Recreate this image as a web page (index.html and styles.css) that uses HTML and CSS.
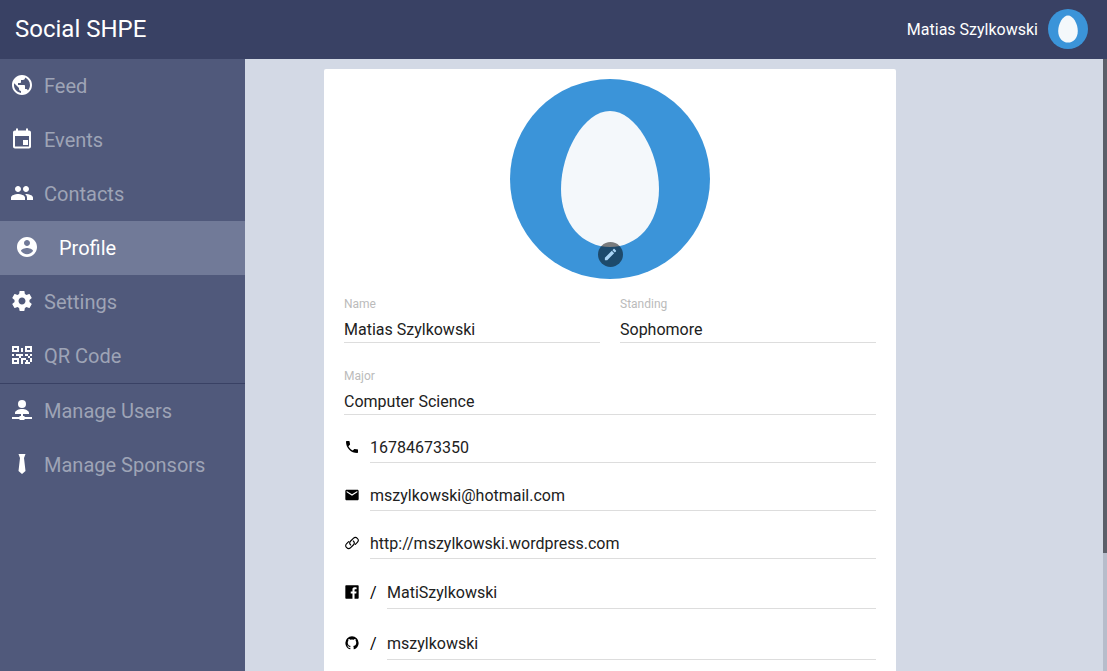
FILE: index.html
```html
<!DOCTYPE html>
<html lang="en">
<head>
<meta charset="utf-8">
<title>Social SHPE</title>
<link rel="stylesheet" href="styles.css">
</head>
<body>
<svg class="symbols" aria-hidden="true">
  <symbol id="egg" viewBox="0 0 200 200"><rect width="200" height="200" fill="#3b94d9"/><path fill="#f4f8fb" d="M100 32C126 32 149 73 149 110C149 145 127 168 100 168C73 168 51 145 51 110C51 73 74 32 100 32Z"/></symbol>
</svg>
<header class="topbar">
  <h1 class="brand">Social SHPE</h1>
  <a class="account" href="#profile"><span>Matias Szylkowski</span><svg class="account-avatar" aria-hidden="true"><use href="#egg"/></svg></a>
</header>
<div class="layout">
  <nav class="sidebar">
    <a class="nav-item" href="#feed"><svg class="nav-icon" viewBox="0 0 24 24"><path d="M12 2C6.48 2 2 6.48 2 12s4.48 10 10 10 10-4.48 10-10S17.52 2 12 2zm-1 17.93c-3.95-.49-7-3.85-7-7.93 0-.62.08-1.21.21-1.79L9 15v1c0 1.1.9 2 2 2v1.93zm6.9-2.54c-.26-.81-1-1.39-1.9-1.39h-1v-3c0-.55-.45-1-1-1H8v-2h2c.55 0 1-.45 1-1V7h2c1.1 0 2-.9 2-2v-.41c2.93 1.19 5 4.06 5 7.41 0 2.08-.8 3.97-2.1 5.39z"/></svg><span class="nav-label">Feed</span></a>
    <a class="nav-item" href="#events"><svg class="nav-icon" viewBox="0 0 24 24"><path d="M18 13h-5v5h5v-5zM16 1.500v2H8v-2H6v2H5c-1.110 0-2 .900-2 2v14c0 1.100.890 2 2 2h14c1.100 0 2-.900 2-2v-14c0-1.100-.900-2-2-2h-1v-2h-2zm3 18H5V9h14v10.500z"/></svg><span class="nav-label">Events</span></a>
    <a class="nav-item" href="#contacts"><svg class="nav-icon" viewBox="0 0 24 24"><path d="M16 11c1.660 0 2.990-1.340 2.990-3S17.660 5 16 5s-3 1.340-3 3 1.340 3 3 3zm-8 0c1.660 0 2.990-1.340 2.990-3S9.660 5 8 5 5 6.340 5 8s1.340 3 3 3zm0 2c-2.330 0-7 1.170-7 3.500V19h14v-2.500c0-2.330-4.670-3.500-7-3.500zm8 0c-.290 0-.620.020-.970.050 1.160.840 1.970 1.970 1.970 3.450V19h6v-2.500c0-2.330-4.670-3.500-7-3.500z"/></svg><span class="nav-label">Contacts</span></a>
    <a class="nav-item nav-item-active" href="#profile" aria-current="page"><svg class="nav-icon" viewBox="0 0 24 24"><path d="M12 2C6.480 2 2 6.480 2 12s4.480 10 10 10 10-4.480 10-10S17.520 2 12 2zm0 3c1.660 0 3 1.340 3 3s-1.340 3-3 3-3-1.340-3-3 1.340-3 3-3zm0 14.200c-2.500 0-4.710-1.280-6-3.220.030-1.990 4-3.080 6-3.080 1.990 0 5.970 1.090 6 3.080-1.290 1.940-3.500 3.220-6 3.220z"/></svg><span class="nav-label">Profile</span></a>
    <a class="nav-item" href="#settings"><svg class="nav-icon" viewBox="0 0 24 24"><path d="M19.430 12.980c.040-.320.070-.640.070-.980s-.030-.660-.070-.980l2.110-1.650c.190-.150.240-.420.120-.640l-2-3.460c-.120-.220-.390-.300-.610-.220l-2.490 1c-.520-.400-1.080-.730-1.690-.980l-.380-2.650C14.460 2.180 14.250 2 14 2h-4c-.250 0-.460.180-.490.420l-.380 2.650c-.610.250-1.170.590-1.690.980l-2.490-1c-.230-.090-.490 0-.610.220l-2 3.460c-.130.220-.070.490.120.640l2.110 1.650c-.040.320-.070.650-.070.980s.030.660.070.980l-2.110 1.650c-.190.150-.240.420-.120.640l2 3.460c.120.220.390.300.610.220l2.490-1c.520.400 1.080.730 1.690.980l.380 2.650c.030.240.240.420.490.420h4c.250 0 .460-.180.490-.420l.380-2.650c.610-.250 1.170-.590 1.690-.980l2.490 1c.230.090.490 0 .610-.220l2-3.460c.120-.220.070-.490-.120-.640l-2.110-1.650zM12 15.500c-1.930 0-3.500-1.570-3.500-3.500s1.570-3.500 3.500-3.500 3.500 1.570 3.500 3.500-1.570 3.500-3.500 3.500z"/></svg><span class="nav-label">Settings</span></a>
    <a class="nav-item" href="#qr"><svg class="nav-icon" viewBox="0 0 24 24"><path fill-rule="evenodd" d="M2 3h7v6H2zM4 5v2h3V5zM15 3h7v6h-7zM17 5v2h3V5zM2 15h7v6H2zM4 17v2h3v-2zM11 5h2v4h-2zM2 11h2v2H2zM6 11h3v2H6zM9 11h4v2h-2v2H9zM15 11h3v2h-3zM20 11h2v2h-2zM18 13h2v2h-2zM11 15h5v2h-3v4h-2zM16 17h2v2h2v2h-5v-2h1zM20 15h2v4h-2z"/></svg><span class="nav-label">QR Code</span></a>
    <a class="nav-item nav-item-divided" href="#users"><svg class="nav-icon" viewBox="0 0 24 24"><circle cx="12" cy="6" r="4"/><path d="M5 16v-1c0-2.500 4-4 7-4s7 1.500 7 4v1h-6v2h1l1 1h7v2h-7l-1 1h-4l-1-1H2v-2h7l1-1h1v-2z"/></svg><span class="nav-label">Manage Users</span></a>
    <a class="nav-item" href="#sponsors"><svg class="nav-icon" viewBox="0 0 24 24"><path d="M8.500 2h7L14 6l1.500 13-3.500 3-3.500-3L10 6z"/></svg><span class="nav-label">Manage Sponsors</span></a>
  </nav>
  <main class="content">
    <section class="card">
      <div class="portrait">
        <svg class="portrait-image" role="img" aria-label="Profile picture"><use href="#egg"/></svg>
        <button class="edit" type="button" aria-label="Edit picture"><svg class="edit-icon" viewBox="0 0 24 24"><path d="M3 17.250V21h3.750L17.810 9.940l-3.750-3.750L3 17.250zM20.710 7.040c.390-.390.390-1.020 0-1.410l-2.340-2.340c-.390-.390-1.020-.390-1.410 0l-1.830 1.830 3.750 3.750 1.830-1.830z"/></svg></button>
      </div>
      <form class="details">
        <div class="field"><label class="field-label" for="name">Name</label><input class="field-input" id="name" value="Matias Szylkowski"></div>
        <div class="field"><label class="field-label" for="standing">Standing</label><input class="field-input" id="standing" value="Sophomore"></div>
        <div class="field field-wide"><label class="field-label" for="major">Major</label><input class="field-input" id="major" value="Computer Science"></div>
      </form>
      <div class="contacts">
        <label class="contact"><svg class="contact-icon" viewBox="0 0 24 24" role="img" aria-label="Phone"><path d="M6.620 10.790c1.440 2.830 3.760 5.140 6.590 6.590l2.200-2.200c.270-.270.670-.360 1.020-.240 1.120.370 2.330.570 3.570.570.550 0 1 .450 1 1V20c0 .550-.450 1-1 1-9.390 0-17-7.610-17-17 0-.550.450-1 1-1h3.500c.550 0 1 .450 1 1 0 1.250.200 2.450.570 3.570.110.350.030.740-.250 1.020l-2.200 2.200z"/></svg><input class="contact-input" type="tel" value="16784673350"></label>
        <label class="contact"><svg class="contact-icon" viewBox="0 0 24 24" role="img" aria-label="Email"><path d="M20 4H4c-1.100 0-2 .900-2 2v12c0 1.100.900 2 2 2h16c1.100 0 2-.900 2-2V6c0-1.100-.900-2-2-2zm0 4l-8 5-8-5V6l8 5 8-5v2z"/></svg><input class="contact-input" type="email" value="mszylkowski@hotmail.com"></label>
        <label class="contact"><svg class="contact-icon" viewBox="0 0 24 24" role="img" aria-label="Website"><path fill="none" stroke="#000" stroke-width="1.700" stroke-linecap="round" d="M10 15c-3-3-1-5 0-6l4-4c2-2 4-2 6 0s2 4 0 6l-3 3M14 9c3 3 1 5 0 6l-4 4c-2 2-4 2-6 0s-2-4 0-6l3-3"/></svg><input class="contact-input" type="url" value="http://mszylkowski.wordpress.com"></label>
      </div>
      <div class="contacts contacts-social">
        <label class="contact"><svg class="contact-icon" viewBox="0 0 24 24" role="img" aria-label="Facebook"><path d="M20.900 2H3.100A1.100 1.100 0 0 0 2 3.100v17.800A1.100 1.100 0 0 0 3.100 22h9.580v-7.750h-2.600v-3h2.600V9a3.640 3.640 0 0 1 3.880-4 20.260 20.260 0 0 1 2.330.120v2.700H17.300c-1.260 0-1.500.600-1.500 1.470v1.930h3l-.390 3H15.800V22h5.100a1.100 1.100 0 0 0 1.100-1.100V3.100A1.100 1.100 0 0 0 20.900 2z"/></svg><span class="slash">/</span><input class="contact-input contact-input-social" value="MatiSzylkowski"></label>
        <label class="contact"><svg class="contact-icon" viewBox="0 0 24 24" role="img" aria-label="GitHub"><path d="M12 2A10 10 0 0 0 2 12c0 4.420 2.870 8.170 6.840 9.500.500.080.660-.230.660-.500v-1.690c-2.770.600-3.360-1.340-3.360-1.340-.460-1.160-1.110-1.470-1.110-1.470-.910-.620.070-.600.070-.600 1 .070 1.530 1.030 1.530 1.030.870 1.520 2.340 1.070 2.910.830.090-.650.350-1.090.630-1.340-2.220-.250-4.550-1.110-4.550-4.920 0-1.110.380-2 1.030-2.710-.100-.250-.450-1.290.100-2.640 0 0 .840-.270 2.750 1.020a9.600 9.600 0 0 1 5 0c1.910-1.290 2.750-1.020 2.750-1.020.550 1.350.200 2.390.100 2.640.650.710 1.030 1.600 1.030 2.710 0 3.820-2.340 4.660-4.570 4.910.360.310.690.920.690 1.850V21c0 .270.160.590.670.500C19.140 20.160 22 16.420 22 12A10 10 0 0 0 12 2z"/></svg><span class="slash">/</span><input class="contact-input contact-input-social" value="mszylkowski"></label>
      </div>
    </section>
  </main>
  <div class="scrollbar" aria-hidden="true"><div class="scrollbar-thumb"></div></div>
</div>
</body>
</html>
```
FILE: styles.css
```css
* {
  box-sizing: border-box;
}

body {
  display: flex;
  flex-direction: column;
  height: 100vh;
  margin: 0;
  overflow: hidden;
  font-family: Roboto, "Open Sans", sans-serif;
  font-size: 16px;
  background: #d3d9e5;
}

a {
  text-decoration: none;
}

.symbols {
  position: absolute;
  width: 0;
  height: 0;
}

.topbar {
  display: flex;
  flex: none;
  align-items: center;
  justify-content: space-between;
  padding: 9px 19px 10px 15px;
  color: #fff;
  background: #394164;
}

.brand {
  margin: 0;
  font-size: 24px;
  font-weight: 400;
}

.account {
  display: flex;
  align-items: center;
  gap: 10px;
  color: #fff;
}

.account-avatar {
  width: 40px;
  height: 40px;
  border-radius: 50%;
}

.layout {
  display: flex;
  flex: 1;
  min-height: 0;
}

.sidebar {
  flex: none;
  width: 245px;
  background: #50597b;
}

.nav-item {
  display: flex;
  align-items: flex-start;
  gap: 10px;
  padding: 14px 10px;
  font-size: 20px;
  line-height: 26px;
  color: #9ea4b6;
}

.nav-item-active {
  gap: 20px;
  padding-left: 15px;
  color: #fff;
  background: #717a98;
}

.nav-item-divided {
  border-top: 1px solid #394164;
}

.nav-icon {
  width: 24px;
  height: 24px;
  fill: #fff;
}

.content {
  display: flex;
  flex: 1;
  align-items: flex-start;
  justify-content: center;
  padding: 10px 128px 10px 0;
  overflow-y: auto;
  scrollbar-width: none;
}

.card {
  width: 100%;
  max-width: 572px;
  padding: 10px 20px 30px;
  background: #fff;
  border-radius: 2px;
}

.portrait {
  position: relative;
  width: 200px;
  height: 200px;
  margin: 0 auto;
}

.portrait-image {
  display: block;
  width: 200px;
  height: 200px;
  border-radius: 50%;
}

.edit {
  position: absolute;
  bottom: 12px;
  left: 50%;
  display: flex;
  align-items: center;
  justify-content: center;
  width: 25px;
  height: 25px;
  margin-left: -12px;
  padding: 0;
  background: rgba(0, 0, 0, 0.5);
  border: 0;
  border-radius: 50%;
}

.edit-icon {
  width: 15px;
  height: 15px;
  fill: #a9d4f5;
}

.details {
  display: grid;
  grid-template-columns: 1fr 1fr;
  gap: 25px 20px;
  margin-top: 17px;
}

.field {
  display: flex;
  flex-direction: column;
  gap: 4px;
}

.field-wide {
  grid-column: 1 / -1;
}

.field-label {
  font-size: 12px;
  line-height: 16px;
  color: #bbb;
}

.field-input,
.contact-input {
  width: 100%;
  min-width: 0;
  height: 27px;
  padding: 0;
  font: inherit;
  color: #212121;
  background: none;
  border: 0;
  border-bottom: 1px solid #ddd;
  outline: 0;
}

.contacts {
  display: flex;
  flex-direction: column;
  gap: 17px;
  margin-top: 17px;
}

.contacts-social {
  gap: 18px;
}

.contact {
  display: flex;
  align-items: center;
  gap: 10px;
}

.contact-icon {
  flex: none;
  width: 16px;
  height: 16px;
  margin-bottom: 2px;
}

.contact-input {
  height: 31px;
}

.contact-input-social {
  height: 33px;
}

.slash {
  flex: none;
  width: 7px;
}

.scrollbar {
  flex: none;
  width: 4px;
  background: #b7bdcb;
}

.scrollbar-thumb {
  height: 80.7%;
  background: #5b5f69;
}
```
